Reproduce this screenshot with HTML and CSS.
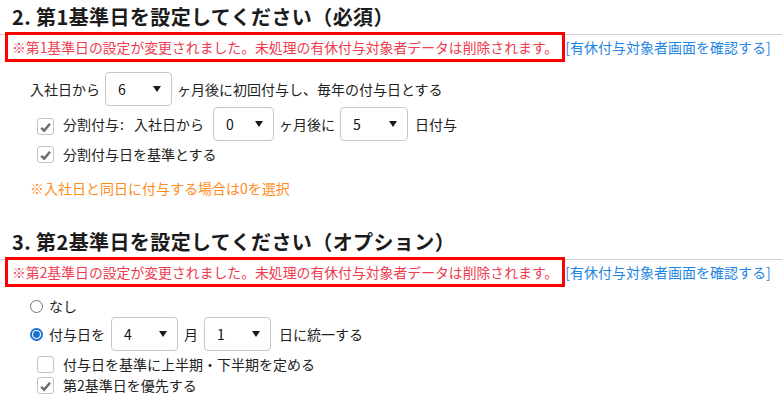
FILE: index.html
```html
<!DOCTYPE html>
<html lang="ja">
<head>
<meta charset="utf-8">
<title>基準日設定</title>
<link rel="stylesheet" href="styles.css">
</head>
<body>
<div class="page">
  <section class="sec">
    <h3 class="title">2. 第1基準日を設定してください（必須）</h3>
    <div class="warnline"><span class="warn">※第1基準日の設定が変更されました。未処理の有休付与対象者データは削除されます。</span><a class="link" href="#">[有休付与対象者画面を確認する]</a></div>
    <div class="body">
      <div class="row row-sel ind-text">
        <span>入社日から</span>
        <span class="sel"><span>6</span><i class="caret"></i></span>
        <span>ヶ月後に初回付与し、毎年の付与日とする</span>
      </div>
      <div class="row row-sel ind-cb">
        <span class="cb cb-low"><svg width="17" height="17" viewBox="0 0 17 17"><rect x="0.5" y="0.5" width="16" height="16" rx="2.5" fill="#fff" stroke="#c4c4c4"/><path d="M4.2 9.8 L7.2 12.6 L13 5.8" fill="none" stroke="#6e6e6e" stroke-width="2.5"/></svg></span>
        <span class="lbl lbl-split">分割付与<span class="colon">:</span>入社日から</span>
        <span class="sel sel-narrow"><span>0</span><i class="caret"></i></span>
        <span>ヶ月後に</span>
        <span class="sel sel-wide"><span>5</span><i class="caret"></i></span>
        <span class="after">日付与</span>
      </div>
      <div class="row row-cb1 ind-cb">
        <span class="cb"><svg width="17" height="17" viewBox="0 0 17 17"><rect x="0.5" y="0.5" width="16" height="16" rx="2.5" fill="#fff" stroke="#c4c4c4"/><path d="M4.2 9.8 L7.2 12.6 L13 5.8" fill="none" stroke="#6e6e6e" stroke-width="2.5"/></svg></span>
        <span class="lbl">分割付与日を基準とする</span>
      </div>
      <p class="note">※入社日と同日に付与する場合は0を選択</p>
    </div>
  </section>

  <section class="sec">
    <h3 class="title title-2">3. 第2基準日を設定してください（オプション）</h3>
    <div class="warnline"><span class="warn">※第2基準日の設定が変更されました。未処理の有休付与対象者データは削除されます。</span><a class="link" href="#">[有休付与対象者画面を確認する]</a></div>
    <div class="body">
      <div class="row row-radio ind-text">
        <span class="rb"><svg width="13" height="13" viewBox="0 0 13 13"><circle cx="6.5" cy="6.5" r="6" fill="#fff" stroke="#767676"/></svg></span>
        <span>なし</span>
      </div>
      <div class="row row-sel2 ind-text">
        <span class="rb"><svg width="13" height="13" viewBox="0 0 13 13"><circle cx="6.5" cy="6.5" r="6.5" fill="#1a6fd4"/><circle cx="6.5" cy="6.5" r="4.6" fill="#fff"/><circle cx="6.5" cy="6.5" r="3.4" fill="#1a6fd4"/></svg></span>
        <span>付与日を</span>
        <span class="sel"><span>4</span><i class="caret"></i></span>
        <span>月</span>
        <span class="sel"><span>1</span><i class="caret"></i></span>
        <span class="after">日に統一する</span>
      </div>
      <div class="row row-cb2 ind-cb">
        <span class="cb"><svg width="17" height="17" viewBox="0 0 17 17"><rect x="0.5" y="0.5" width="16" height="16" rx="2.5" fill="#fff" stroke="#c4c4c4"/></svg></span>
        <span class="lbl">付与日を基準に上半期・下半期を定める</span>
      </div>
      <div class="row row-cb3 ind-cb">
        <span class="cb"><svg width="17" height="17" viewBox="0 0 17 17"><rect x="0.5" y="0.5" width="16" height="16" rx="2.5" fill="#fff" stroke="#c4c4c4"/><path d="M4.2 9.8 L7.2 12.6 L13 5.8" fill="none" stroke="#6e6e6e" stroke-width="2.5"/></svg></span>
        <span class="lbl">第2基準日を優先する</span>
      </div>
    </div>
  </section>
</div>
</body>
</html>
```

FILE: styles.css
```css
* { box-sizing: border-box; }

body {
  margin: 0;
  background: #fff;
  color: #222;
  font-family: "Noto Sans CJK JP", "Noto Sans", sans-serif;
  font-size: 14px;
}

.page {
  padding-right: 1px;
}

.title {
  margin: 4px 0 0;
  padding: 0 0 4px 12px;
  font-size: 20px;
  line-height: 26px;
  font-weight: 700;
  letter-spacing: 0.4px;
  color: #1b1b1b;
  border-bottom: 1px solid #cfcfcf;
}

.title-2 {
  margin-top: 31px;
}

.warnline {
  display: flex;
  align-items: center;
  height: 24px;
  padding-left: 8px;
  white-space: nowrap;
}

.warn {
  display: inline-block;
  height: 24px;
  line-height: 24px;
  padding: 0 4px;
  font-size: 13.85px;
  color: #f03a4e;
  outline: 3px solid #ff0000;
}

.link {
  margin-left: 3px;
  color: #1f86e2;
  text-decoration: none;
  line-height: 24px;
}

.body {
  padding-top: 12px;
}

.row {
  display: flex;
  align-items: center;
  gap: 5px;
  white-space: nowrap;
}

.ind-text { padding-left: 30px; }
.ind-cb { padding-left: 37px; }

.row-sel { height: 35px; }
.row-cb1 { height: 26px; }
.row-radio { height: 20px; gap: 6px; }
.row-sel2 { height: 36px; gap: 6px; }
.row-cb2 { height: 24px; }
.row-cb3 { height: 18px; }

.cb {
  display: flex;
  width: 17px;
  height: 17px;
  margin-right: 4px;
}

.cb-low { margin-top: 6px; }

.rb {
  display: flex;
  width: 13px;
  height: 13px;
}

.colon {
  display: inline-block;
  padding: 0 10px 0 1px;
}

.lbl { margin-right: 2px; }
.lbl-split { margin-right: 4px; }

.after { margin-left: 2px; }

.sel {
  display: inline-flex;
  align-items: center;
  justify-content: space-between;
  width: 67px;
  height: 34px;
  padding: 0 10px 0 12px;
  border: 1px solid #c8c8c8;
  border-radius: 4px;
  background: #fff;
  font-size: 14px;
  color: #111;
}

.sel-narrow { width: 61px; }
.sel-wide { width: 68px; }

.caret {
  display: block;
  width: 0;
  height: 0;
  border-left: 4.5px solid transparent;
  border-right: 4.5px solid transparent;
  border-top: 6px solid #1a1a1a;
}

.note {
  margin: 11px 0 0;
  padding-left: 30px;
  line-height: 20px;
  color: #ff8c1c;
}
```
